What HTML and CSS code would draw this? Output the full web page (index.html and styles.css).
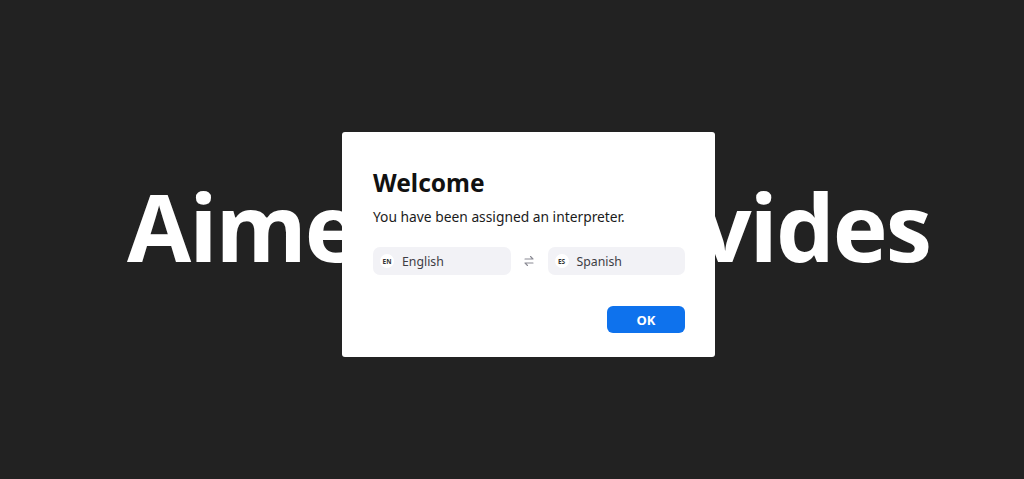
FILE: index.html
```html
<!DOCTYPE html>
<html lang="en">

<head>
    <meta charset="UTF-8">
    <meta name="viewport" content="width=device-width, initial-scale=1.0">
    <title>Welcome</title>
    <link rel="stylesheet" href="styles.css">
</head>

<body>
    <div class="stage">
        <h1 class="backdrop-title">Aimee AI provides</h1>

        <div class="overlay">
            <div class="modal">
                <h2 class="modal-title">Welcome</h2>
                <p class="modal-text">You have been assigned an interpreter.</p>

                <div class="lang-row">
                    <div class="lang-pill">
                        <span class="lang-code">EN</span>
                        <span class="lang-name">English</span>
                    </div>
                    <span class="swap">
                        <svg width="12" height="12" viewBox="0 0 12 12" fill="none" stroke="#8a8a93" stroke-width="1.1" stroke-linecap="round" stroke-linejoin="round">
                            <path d="M2 4h8M7.5 1.5l2.5 2.5M10 8H2M4.5 10.5l-2.5-2.5" />
                        </svg>
                    </span>
                    <div class="lang-pill">
                        <span class="lang-code">ES</span>
                        <span class="lang-name">Spanish</span>
                    </div>
                </div>

                <div class="actions">
                    <button class="ok-btn">OK</button>
                </div>
            </div>
        </div>
    </div>
</body>

</html>
```

FILE: styles.css
```css
html,
body {
    margin: 0;
    height: 100%;
}

body {
    background: #222222;
    font-family: "Noto Sans", "Open Sans", sans-serif;
    overflow: hidden;
}

.stage {
    position: relative;
    height: 100%;
    display: flex;
    align-items: center;
    justify-content: flex-start;
    padding-left: 127px;
}

.backdrop-title {
    margin: 0 0 27px 0;
    color: #ffffff;
    font-family: "Open Sans", "Noto Sans", sans-serif;
    font-weight: 700;
    font-size: 93px;
    letter-spacing: -2px;
    white-space: nowrap;
}

.overlay {
    position: absolute;
    inset: 0;
    display: flex;
    align-items: flex-start;
    justify-content: center;
    padding-top: 132px;
}

.modal {
    width: 373px;
    box-sizing: border-box;
    background: #ffffff;
    border-radius: 3px;
    padding: 36px 30px 24px 31px;
    margin-left: 33px;
}

.modal-title {
    margin: 0;
    font-size: 24.5px;
    font-weight: 700;
    line-height: 30px;
    color: #111111;
}

.modal-text {
    margin: 9px 0 0 0;
    font-size: 13.8px;
    line-height: 20px;
    color: #1b1b1b;
}

.lang-row {
    display: flex;
    align-items: center;
    margin-top: 20px;
}

.lang-pill {
    flex: 1;
    display: flex;
    align-items: center;
    height: 28px;
    padding-left: 7px;
    background: #f2f2f6;
    border-radius: 7px;
}

.lang-code {
    width: 14px;
    height: 14px;
    border-radius: 50%;
    background: #ffffff;
    font-size: 6.5px;
    font-weight: 700;
    color: #333;
    display: flex;
    align-items: center;
    justify-content: center;
}

.lang-name {
    margin-left: 8px;
    font-size: 12.3px;
    color: #3d3d44;
}

.swap {
    width: 37px;
    display: flex;
    justify-content: center;
}

.actions {
    display: flex;
    justify-content: flex-end;
    margin-top: 31px;
}

.ok-btn {
    width: 78px;
    height: 27px;
    border: none;
    border-radius: 6px;
    background: #0e72ed;
    color: #ffffff;
    font-family: inherit;
    font-weight: 700;
    font-size: 13px;
    cursor: pointer;
}
```
